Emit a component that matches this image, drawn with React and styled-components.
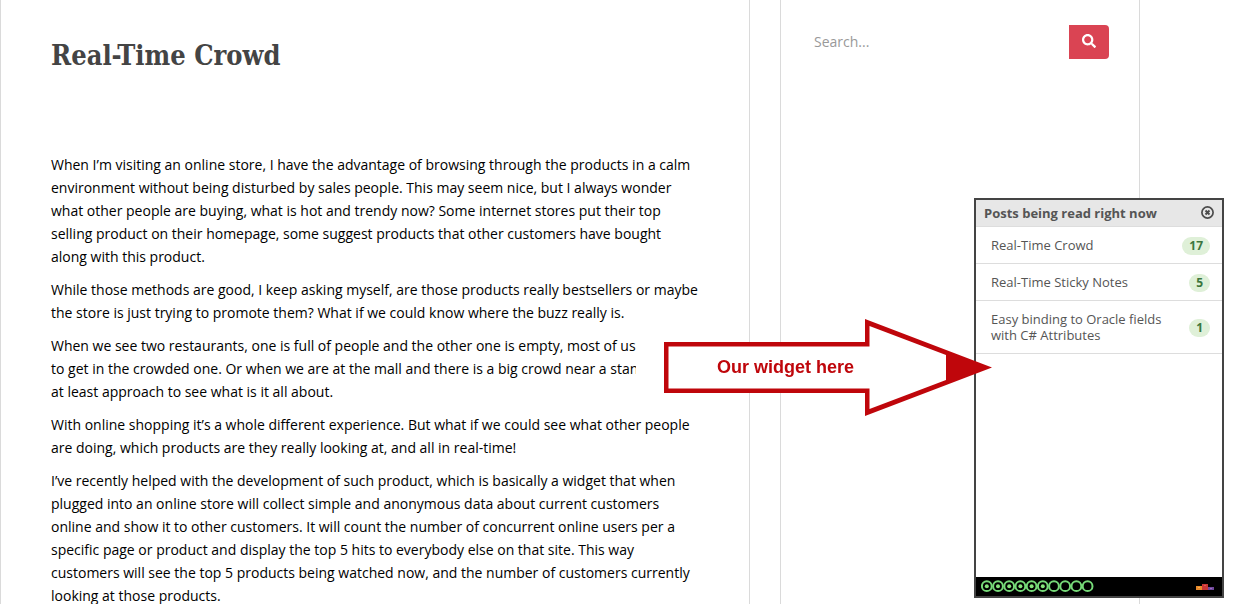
import React from "react";
import styled, { createGlobalStyle } from "styled-components";
import { FaSearch } from "react-icons/fa";

const GlobalStyle = createGlobalStyle`
  * { box-sizing: border-box; }
  body {
    margin: 0;
    background: #fff;
    color: #000;
    font: 14px/23px "Open Sans", sans-serif;
  }
`;

const Page = styled.div`
  display: grid;
  grid-template-columns: minmax(0, 25fr) minmax(0, 12fr);
  column-gap: 30px;
  min-height: 100vh;
  padding-right: 100px;
`;

const Article = styled.main`
  border: solid #dadada;
  border-width: 0 1px;
  padding: 35px 50px 0;
`;

const Title = styled.h1`
  margin: 0 0 76px;
  color: #444;
  font: bold 27px/42px "Roboto Slab", "DejaVu Serif Condensed", "DejaVu Serif", serif;
`;

const Paragraph = styled.p`
  margin: 0 0 10px;
`;

const Sidebar = styled.aside`
  border: solid #dadada;
  border-width: 0 1px;
  padding: 25px 30px;
`;

const SearchForm = styled.form`
  display: flex;
  height: 34px;
`;

const SearchInput = styled.input`
  flex: 1;
  min-width: 0;
  border: 0;
  padding: 0 3px 2px;
  background: transparent;
  color: #555;
  font: inherit;
  &::placeholder { color: #999; opacity: 1; }
`;

const SearchButton = styled.button`
  display: flex;
  align-items: center;
  justify-content: center;
  width: 40px;
  border: 0;
  border-radius: 0 4px 4px 0;
  padding: 0 0 2px;
  background: #da4453;
  color: #fff;
  font-size: 14px;
`;

const Widget = styled.section`
  position: fixed;
  right: 16px;
  bottom: 6px;
  display: flex;
  flex-direction: column;
  width: 250px;
  height: 400px;
  border: 2px solid #444;
  background: #fff;
  color: #555;
  font-size: 13px;
  line-height: 16px;
`;

const WidgetHeader = styled.header`
  display: flex;
  align-items: center;
  justify-content: space-between;
  height: 27px;
  border-bottom: 1px solid #ddd;
  padding: 0 8px;
  background: #e7e7e7;
`;

const WidgetTitle = styled.h2`
  margin: 0;
  font-size: 13px;
  line-height: 16px;
`;

const CloseButton = styled.button`
  display: flex;
  border: 0;
  padding: 0 0 1px;
  background: none;
  color: #4c4c4c;
`;

const PostList = styled.ul`
  flex: 1;
  margin: 0;
  padding: 0;
  list-style: none;
`;

const PostRow = styled.li`
  display: flex;
  align-items: center;
  justify-content: space-between;
  border-bottom: 1px solid #ddd;
  padding: 10px 12px 10px 15px;
`;

const PostLink = styled.a`
  max-width: 180px;
  color: inherit;
  text-decoration: none;
`;

const Badge = styled.span`
  margin-bottom: -2px;
  border-radius: 9px;
  padding: 0 7px;
  background: #dff0d8;
  color: #3c763d;
  font-size: 12px;
  font-weight: bold;
  line-height: 18px;
`;

const WidgetFooter = styled.footer`
  display: flex;
  align-items: center;
  justify-content: space-between;
  height: 19px;
  padding: 0 8px 0 5px;
  background: #000;
`;

const Callout = styled.div`
  position: fixed;
  right: 248px;
  bottom: 188px;
  width: 356px;
  height: 98px;
`;

const CalloutShape = styled.svg`
  display: block;
`;

const CalloutLabel = styled.strong`
  position: absolute;
  top: 38px;
  left: 81px;
  color: #bf060b;
  font: bold 18px/22px "Liberation Sans", Arial, sans-serif;
  white-space: nowrap;
`;

const posts = [
  { title: "Real-Time Crowd", readers: 17 },
  { title: "Real-Time Sticky Notes", readers: 5 },
  { title: "Easy binding to Oracle fields with C# Attributes", readers: 1 },
];

function CloseIcon() {
  return (
    <svg width="13" height="13" viewBox="0 0 13 13" fill="none" stroke="currentColor" aria-hidden="true">
      <circle cx="6.5" cy="6.5" r="5.6" strokeWidth="1.7" />
      <path d="M4.5 4.5l4 4M8.5 4.5l-4 4" strokeWidth="1.9" />
    </svg>
  );
}

function Rings() {
  return (
    <svg width="113" height="13" viewBox="0 0 113 13" fill="none" aria-hidden="true">
      {Array.from({ length: 10 }, (_, i) => (
        <g key={i}>
          <circle cx={5.8 + i * 11.2} cy="6.2" r="4.9" stroke="#76d978" strokeWidth="2" />
          {i < 6 && <circle cx={5.8 + i * 11.2} cy="6.2" r="2" fill="#86e47c" />}
        </g>
      ))}
    </svg>
  );
}

function BlocksLogo() {
  return (
    <svg width="18" height="8" viewBox="0 0 18 8" aria-hidden="true">
      <path fill="#e88a2c" d="M0 3h6v4H0z" />
      <path fill="#f6b04c" d="M2 4h2v1H2z" />
      <path fill="#70489c" d="M12 4h6v3h-6z" />
      <path fill="#9c70c0" d="M14 5h2v1h-2z" />
      <path fill="#c93636" d="M6 1h6v6H6z" />
      <path fill="#e25a50" d="M8 2h2v1H8z" />
    </svg>
  );
}

export default function App() {
  return (
    <>
      <GlobalStyle />
      <Page>
        <Article>
          <Title>Real-Time Crowd</Title>
          <Paragraph>
            When I’m visiting an online store, I have the advantage of browsing through the products in a calm
            environment without being disturbed by sales people. This may seem nice, but I always wonder what other
            people are buying, what is hot and trendy now? Some internet stores put their top selling product on their
            homepage, some suggest products that other customers have bought along with this product.
          </Paragraph>
          <Paragraph>
            While those methods are good, I keep asking myself, are those products really bestsellers or maybe the
            store is just trying to promote them? What if we could know where the buzz really is.
          </Paragraph>
          <Paragraph>
            When we see two restaurants, one is full of people and the other one is empty, most of us
            <br />
            to get in the crowded one. Or when we are at the mall and there is a big crowd near a stan
            <br />
            at least approach to see what is it all about.
          </Paragraph>
          <Paragraph>
            With online shopping it’s a whole different experience. But what if we could see what other people are
            doing, which products are they really looking at, and all in real-time!
          </Paragraph>
          <Paragraph>
            I’ve recently helped with the development of such product, which is basically a widget that when plugged
            into an online store will collect simple and anonymous data about current customers online and show it to
            other customers. It will count the number of concurrent online users per a specific page or product and
            display the top 5 hits to everybody else on that site. This way customers will see the top 5 products being
            watched now, and the number of customers currently looking at those products.
          </Paragraph>
        </Article>
        <Sidebar>
          <SearchForm role="search" onSubmit={(e) => e.preventDefault()}>
            <SearchInput type="text" placeholder="Search..." aria-label="Search" />
            <SearchButton type="submit" aria-label="Search">
              <FaSearch />
            </SearchButton>
          </SearchForm>
        </Sidebar>
      </Page>
      <Widget>
        <WidgetHeader>
          <WidgetTitle>Posts being read right now</WidgetTitle>
          <CloseButton type="button" aria-label="Close">
            <CloseIcon />
          </CloseButton>
        </WidgetHeader>
        <PostList>
          {posts.map((post) => (
            <PostRow key={post.title}>
              <PostLink href="#">{post.title}</PostLink>
              <Badge>{post.readers}</Badge>
            </PostRow>
          ))}
        </PostList>
        <WidgetFooter>
          <Rings />
          <BlocksLogo />
        </WidgetFooter>
      </Widget>
      <Callout>
        <CalloutShape width="356" height="98" viewBox="0 0 356 98" aria-hidden="true">
          <path fill="#fff" d="M0 17h40v64H0z" />
          <path fill="#bf060b" d="M28 24H229V1L356 49.5L229 98V75H28z" />
          <path fill="#fff" d="M32.5 28.5H233.5V8L310 37V62L233.5 91V70.5H32.5z" />
        </CalloutShape>
        <CalloutLabel>Our widget here</CalloutLabel>
      </Callout>
    </>
  );
}
